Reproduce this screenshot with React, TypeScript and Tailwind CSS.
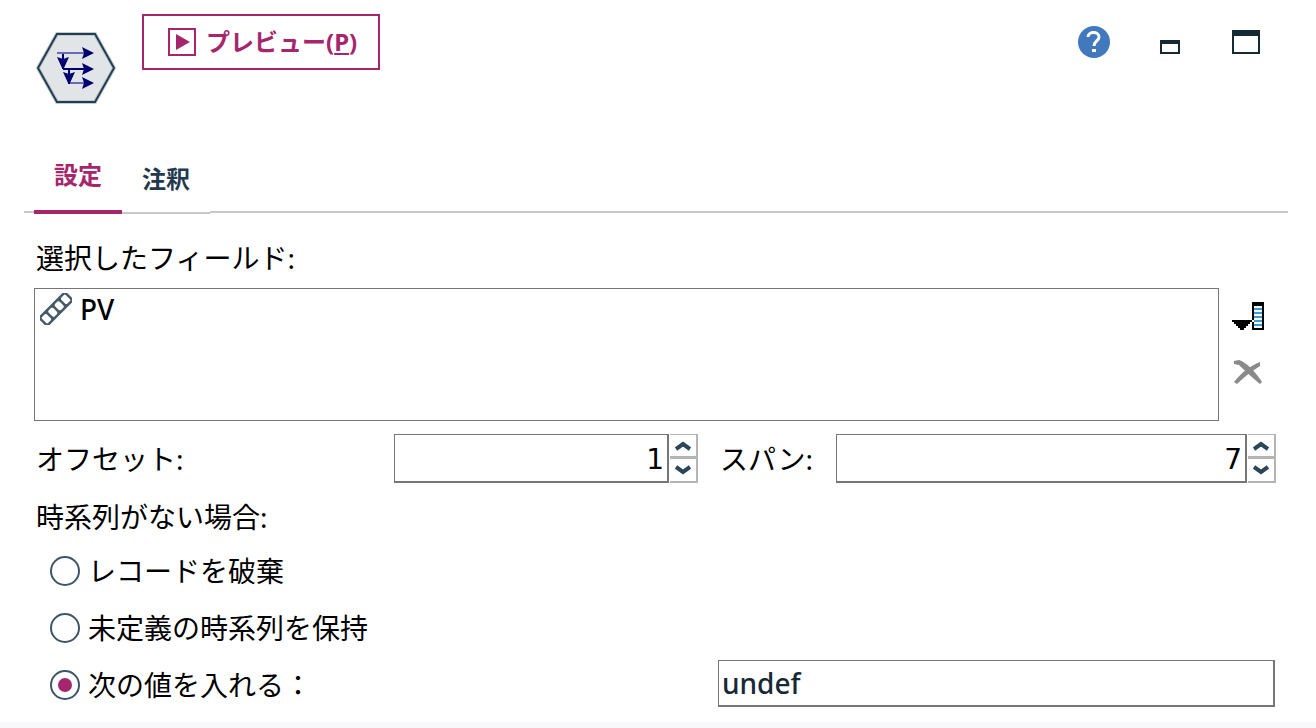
import { useState } from 'react';
import type { ReactNode } from 'react';

const MISSING_OPTIONS = [
  { value: 'discard', label: 'レコードを破棄' },
  { value: 'keep', label: '未定義の時系列を保持' },
  { value: 'fill', label: '次の値を入れる：' },
];

function NodeIcon() {
  return (
    <svg width="80" height="72" viewBox="0 0 80 72" aria-hidden="true">
      <path d="M21 2H59L78 36L59 70H21L2 36Z" fill="#e1e5e8" stroke="#c2cbd0" strokeWidth="4" />
      <path d="M21 2H59L78 36L59 70H21L2 36Z" fill="none" stroke="#233d52" strokeWidth="2" />
      <g strokeWidth="2" fill="none">
        <path d="M21 21H50M34 51H50" stroke="#6c6cb4" />
        <path d="M27 37H50M27 22V37M33 37V52" stroke="#00006c" />
      </g>
      <g fill="#000070">
        <path d="M46 15L58 21L46 27L48 21ZM46 31L58 37L46 43L48 37ZM46 45L58 51L46 57L48 51Z" />
        <path d="M21 25L27 27L33 25L28 36H26ZM27 40L33 42L39 40L34 51H32Z" />
      </g>
    </svg>
  );
}

function PreviewIcon() {
  return (
    <svg width="28" height="28" viewBox="0 0 28 28" aria-hidden="true">
      <rect x="1" y="1" width="26" height="26" fill="none" stroke="#a6266e" strokeWidth="2" />
      <path d="M8 6L22 14L8 22Z" fill="#a6266e" />
    </svg>
  );
}

function HelpIcon() {
  return (
    <svg width="32" height="32" viewBox="0 0 32 32" aria-hidden="true">
      <circle cx="16" cy="16" r="16" fill="#4178be" />
      <path d="M10 11C10 5 21 5 21 11C21 15 16 15 16 20" fill="none" stroke="#fff" strokeWidth="3" />
      <path d="M14 23H18V26H14Z" fill="#fff" />
    </svg>
  );
}

function ContinuousIcon() {
  return (
    <svg width="32" height="32" viewBox="0 0 32 32" fill="none" stroke="#465a69" aria-hidden="true">
      <g transform="rotate(-45 16 16)">
        <rect x="-2" y="10.5" width="36" height="11" rx="2.5" strokeWidth="2.5" />
        <path d="M7 11V21M16 11V21M25 11V21" strokeWidth="2.5" />
        <path d="M5 11L7 13L9 11M14 11L16 13L18 11M23 11L25 13L27 11M5 21L7 19L9 21M14 21L16 19L18 21M23 21L25 19L27 21" strokeWidth="1.5" />
      </g>
    </svg>
  );
}

function FieldPickerIcon() {
  return (
    <svg width="32" height="28" viewBox="0 0 32 28" shapeRendering="crispEdges" aria-hidden="true">
      <rect x="20" width="12" height="28" fill="#000" />
      <rect x="22" y="4" width="8" height="22" fill="#f2fbff" />
      <path d="M22 7H30M22 11H30M22 15H30M22 19H30M22 23H30" stroke="#3c9bd0" strokeWidth="2" />
      <path d="M0 18H20V20H18V22H16V24H14V26H12V28H8V26H6V24H4V22H2V20H0Z" fill="#000" />
      <rect x="20" y="18" width="2" height="2" fill="#fff" />
    </svg>
  );
}

function RemoveIcon() {
  return (
    <svg width="28" height="24" viewBox="0 0 28 24" aria-hidden="true">
      <path d="M0 1L5 0C12 2 22 12 28 22L26 24C19 18 10 10 5 5L0 4Z" fill="#8a8a8a" />
      <path d="M26 2V6C18 11 10 17 3 24L0 22C8 12 16 6 26 2Z" fill="#8a8a8a" />
    </svg>
  );
}

function Chevron({ up = false }: { up?: boolean }) {
  return (
    <svg width="16" height="10" viewBox="0 0 16 10" aria-hidden="true">
      <path d={up ? 'M1 8L8 3L15 8' : 'M1 2L8 7L15 2'} fill="none" stroke="#2b4659" strokeWidth="4" />
    </svg>
  );
}

function IconButton({ label, children }: { label: string; children: ReactNode }) {
  return (
    <button type="button" aria-label={label} className="flex shrink-0 items-center justify-center">
      {children}
    </button>
  );
}

interface SpinnerProps {
  id: string;
  value: number;
  onChange: (value: number) => void;
}

function Spinner({ id, value, onChange }: SpinnerProps) {
  return (
    <div className="flex h-[49px] w-full gap-px">
      <input
        id={id}
        type="text"
        inputMode="numeric"
        value={value}
        onChange={(e) => onChange(Number(e.target.value) || 0)}
        className="min-w-0 flex-1 border border-r-2 border-b-2 border-[#767676] bg-white pt-1 pr-[3px] text-right font-['DejaVu_Sans',sans-serif] outline-none"
      />
      <div className="flex w-7 flex-col">
        <button
          type="button"
          aria-label="増やす"
          onClick={() => onChange(value + 1)}
          className="flex h-6 items-center justify-center border-t border-r-2 border-b-2 border-[#b4b4b4]"
        >
          <Chevron up />
        </button>
        <button
          type="button"
          aria-label="減らす"
          onClick={() => onChange(value - 1)}
          className="flex flex-1 items-center justify-center border-t border-r-2 border-b-2 border-[#b4b4b4]"
        >
          <Chevron />
        </button>
      </div>
    </div>
  );
}

export default function App() {
  const [tab, setTab] = useState('settings');
  const [offset, setOffset] = useState(1);
  const [span, setSpan] = useState(7);
  const [missing, setMissing] = useState('fill');
  const [fillValue, setFillValue] = useState('undef');

  return (
    <div className="flex min-h-screen flex-col bg-white font-['Noto_Sans','Noto_Sans_CJK_JP',sans-serif] text-[28px] leading-10 text-black">
      <header className="flex items-start pt-[14px] pr-14 pl-9">
        <div className="pt-[18px]">
          <NodeIcon />
        </div>
        <button
          type="button"
          className="ml-[26px] flex h-14 items-center gap-2.5 border-2 border-[#a6266e] pr-[21px] pl-6 text-2xl font-bold text-[#a6266e]"
        >
          <PreviewIcon />
          <span>
            プレビュー(<span className="underline decoration-2 underline-offset-2">P</span>)
          </span>
        </button>
        <div className="ml-auto flex h-14 items-center">
          <IconButton label="ヘルプ">
            <HelpIcon />
          </IconButton>
          <div className="ml-[50px] pt-2.5">
            <IconButton label="最小化">
              <span className="h-[14px] w-5 border-2 border-t-4 border-[#152935]" />
            </IconButton>
          </div>
          <div className="ml-[52px]">
            <IconButton label="最大化">
              <span className="h-6 w-7 border-2 border-t-[6px] border-[#152935]" />
            </IconButton>
          </div>
        </div>
      </header>

      <div role="tablist" className="mr-7 ml-6 mt-10 flex items-end text-2xl font-bold">
        <span className="mb-px h-0.5 w-2.5 bg-[#c8c8c8]" />
        <button
          type="button"
          role="tab"
          aria-selected={tab === 'settings'}
          onClick={() => setTab('settings')}
          className="h-[70px] w-[88px] border-b-4 border-[#a6266e] pb-1 text-[#a6266e]"
        >
          設定
        </button>
        <button
          type="button"
          role="tab"
          aria-selected={tab === 'annotations'}
          onClick={() => setTab('annotations')}
          className="h-[70px] w-[88px] border-b-2 border-[#c8c8c8] pt-0.5 text-[#23394d]"
        >
          注釈
        </button>
        <span className="mb-px h-0.5 flex-1 bg-[#c8c8c8]" />
      </div>

      <main className="flex-1 pr-10 pl-[34px]">
        <div className="mt-6 pl-0.5">選択したフィールド:</div>
        <div className="mt-2.5 flex gap-[13px]">
          <ul className="h-[133px] flex-1 border border-[#767676]">
            <li className="flex items-center gap-2 pl-[5px] font-medium">
              <ContinuousIcon />
              PV
            </li>
          </ul>
          <div className="mr-3 flex flex-col items-center gap-[30px] pt-[14px]">
            <IconButton label="フィールドを選択">
              <FieldPickerIcon />
            </IconButton>
            <IconButton label="フィールドを削除">
              <RemoveIcon />
            </IconButton>
          </div>
        </div>

        <div className="mt-[13px] grid grid-cols-[360px_minmax(0,304fr)_22px_116px_minmax(0,440fr)] items-center">
          <label htmlFor="offset" className="pl-0.5">
            オフセット:
          </label>
          <Spinner id="offset" value={offset} onChange={setOffset} />
          <span />
          <label htmlFor="span">スパン:</label>
          <Spinner id="span" value={span} onChange={setSpan} />
        </div>

        <fieldset className="pt-[14px]">
          <legend className="contents">
            <span className="block pl-0.5">時系列がない場合:</span>
          </legend>
          <div className="mt-[5px] mr-px grid grid-cols-[684px_minmax(0,1fr)]">
            <div>
              {MISSING_OPTIONS.map((option) => (
                <label key={option.value} className="flex h-[57px] items-center gap-2 pl-4">
                  <input
                    type="radio"
                    name="missing"
                    value={option.value}
                    checked={missing === option.value}
                    onChange={() => setMissing(option.value)}
                    className="h-[30px] w-[30px] appearance-none rounded-full border-2 border-[#3d5567] bg-clip-content p-1.5 checked:bg-[#a6266e]"
                  />
                  {option.label}
                </label>
              ))}
            </div>
            <input
              type="text"
              aria-label="次の値を入れる"
              value={fillValue}
              onChange={(e) => setFillValue(e.target.value)}
              className="mb-1.5 h-[47px] w-full self-end border border-r-2 border-b-2 border-[#767676] bg-white pl-[3px] font-medium text-[#152935] outline-none"
            />
          </div>
        </fieldset>
      </main>
      <footer className="h-1.5 bg-[#f8f8fa]" />
    </div>
  );
}
